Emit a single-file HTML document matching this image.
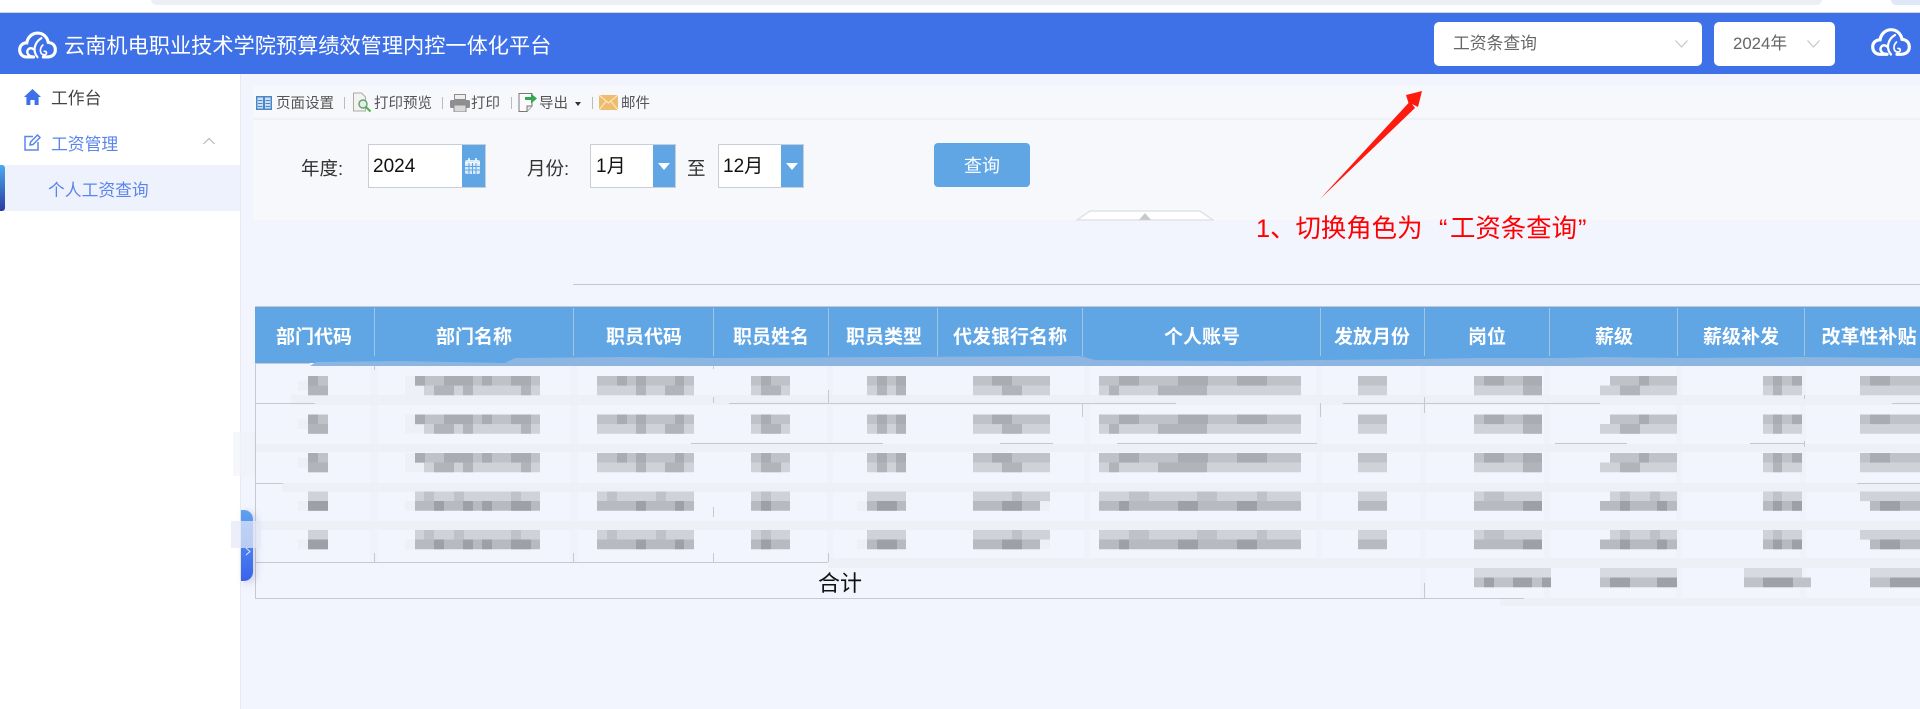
<!DOCTYPE html>
<html lang="zh-CN"><head><meta charset="utf-8"><title>个人工资查询</title>
<style>
html,body{margin:0;padding:0}
body{width:1920px;height:709px;position:relative;overflow:hidden;background:#f2f5fe;font-family:"Liberation Sans","Noto Sans CJK SC",sans-serif;color:#333}
.a,.t{position:absolute;box-sizing:border-box}
.t{white-space:nowrap}
.th{position:absolute;top:324px;height:28px;line-height:28px;font-size:19px;font-weight:700;color:#fff;text-align:center;white-space:nowrap;transform:translateX(-50%)}
.tb{top:94px;height:20px;line-height:20px;font-size:14.5px;color:#555}
.sp{position:absolute;top:97px;width:1px;height:12px;background:#bbb}
.inp{position:absolute;top:144px;height:43px;background:#fff;border:1px solid #c9cdd8}
.btn{position:absolute;top:0;right:0;bottom:0;width:22px;background:#60a5e4}
.tri{position:absolute;left:5px;top:18px;width:0;height:0;border-left:6px solid transparent;border-right:6px solid transparent;border-top:7px solid #fff}
.val{top:154px;height:26px;line-height:26px;font-size:19px;color:#111}
.lab{top:156px;height:26px;line-height:26px;font-size:18.5px;color:#333}
.sel{position:absolute;top:22px;height:44px;background:#fff;border-radius:5px}
</style></head>
<body>
<div class="a" style="left:0;top:0;width:1920px;height:12px;background:#fff"></div>
<div class="a" style="left:151px;top:0;width:1671px;height:5px;background:#eceff5;border-radius:0 0 12px 12px"></div>
<div class="a" style="left:1891px;top:0;width:29px;height:5px;background:#dfe8fa;border-radius:0 0 0 10px"></div>
<div class="a" style="left:0;top:12px;width:1920px;height:1px;background:#d4d4d4"></div>

<!-- header -->
<div class="a" style="left:0;top:13px;width:1920px;height:61px;background:#3e70e8"></div>
<svg class="a" style="left:18px;top:31px" width="39" height="28" viewBox="0 0 40 28" fill="none" stroke="#fff" stroke-width="3.200" stroke-linecap="round"><path d="M16 26.300H9C4 26.300 1.700 22.500 1.700 19 1.700 14.500 5 11.800 9 11.800 10 6 14.500 1.700 20 1.700 26 1.700 30 6 31 11.300 36 11.800 38.300 15 38.300 19 38.300 23.500 35 26.300 30 26.300H26"/><path d="M16 26C10.500 26 8 21.500 10.500 18.500 12 16.800 14.500 17 16 18.500" stroke-width="2.400"/><path d="M24 7C17 11 14.500 20 20 26.500" stroke-width="2.200"/><path d="M25.500 14C21.500 18 22.500 24 27 24 30 24 30 20 27 20.500" stroke-width="1.700"/></svg>
<div class="t" style="left:64px;top:32px;height:30px;line-height:30px;font-size:21.2px;color:#fff">云南机电职业技术学院预算绩效管理内控一体化平台</div>
<div class="sel" style="left:1434px;width:268px"></div>
<div class="t" style="left:1453px;top:32px;height:24px;line-height:24px;font-size:16.800px;color:#666">工资条查询</div>
<svg class="a" style="left:1674px;top:39px" width="15" height="10" fill="none" stroke="#c4c7cf" stroke-width="1.200"><path d="M1.500 1.500L7.500 8 13.500 1.500"/></svg>
<div class="sel" style="left:1714px;width:121px"></div>
<div class="t" style="left:1733px;top:32px;height:24px;line-height:24px;font-size:16.800px;color:#666">2024年</div>
<svg class="a" style="left:1806px;top:39px" width="15" height="10" fill="none" stroke="#c4c7cf" stroke-width="1.200"><path d="M1.500 1.500L7.500 8 13.500 1.500"/></svg>
<svg class="a" style="left:1871px;top:28px" width="40" height="28" viewBox="0 0 40 28" fill="none" stroke="#fff" stroke-width="3.200" stroke-linecap="round"><path d="M16 26.300H9C4 26.300 1.700 22.500 1.700 19 1.700 14.500 5 11.800 9 11.800 10 6 14.500 1.700 20 1.700 26 1.700 30 6 31 11.300 36 11.800 38.300 15 38.300 19 38.300 23.500 35 26.300 30 26.300H26"/><path d="M16 26C10.500 26 8 21.500 10.500 18.500 12 16.800 14.500 17 16 18.500" stroke-width="2.400"/><path d="M24 7C17 11 14.500 20 20 26.500" stroke-width="2.200"/><path d="M25.500 14C21.500 18 22.500 24 27 24 30 24 30 20 27 20.500" stroke-width="1.700"/></svg>

<!-- sidebar -->
<div class="a" style="left:0;top:74px;width:241px;height:635px;background:#fff;border-right:1px solid #e8eaef"></div>
<svg class="a" style="left:24px;top:89px" width="17" height="16" viewBox="0 0 17 16" fill="#3e70e8"><path d="M8.500 0L17 8h-2.400v8h-4v-5H6.400v5h-4V8H0z"/></svg>
<div class="t" style="left:51px;top:87px;height:24px;line-height:24px;font-size:16.800px;color:#444">工作台</div>
<svg class="a" style="left:24px;top:134px" width="17" height="17" viewBox="0 0 17 17" fill="none" stroke="#5b85ea" stroke-width="1.500"><path d="M9 2.500H1v13.500h13V8"/><path d="M6 11l.6-3L13.500 1l2.500 2.500-7 7z"/></svg>
<div class="t" style="left:51px;top:133px;height:24px;line-height:24px;font-size:16.800px;color:#5b85ea">工资管理</div>
<svg class="a" style="left:203px;top:137px" width="12" height="8" fill="none" stroke="#b0b3ba" stroke-width="1"><path d="M.5 7L6 1.500 11.500 7"/></svg>
<div class="a" style="left:0;top:165px;width:240px;height:46px;background:#eef2fd"></div>
<div class="a" style="left:0;top:165px;width:5px;height:46px;background:linear-gradient(#4aaaf0,#2a3aa0);border-radius:0 3px 3px 0"></div>
<div class="t" style="left:48px;top:179px;height:24px;line-height:24px;font-size:16.800px;color:#5b85ea">个人工资查询</div>

<!-- top panel -->
<div class="a" style="left:253px;top:86px;width:1667px;height:134px;background:#f7f8fb"></div>
<div class="a" style="left:253px;top:118px;width:1667px;height:2px;background:#f0f1f4"></div>

<!-- toolbar icons -->
<svg class="a" style="left:256px;top:96px" width="16" height="14"><rect width="16" height="14" fill="#4a86c8"/><rect x="1.500" y="1.500" width="5.500" height="11" fill="#cfe0f4"/><rect x="9" y="1.500" width="5.500" height="11" fill="#cfe0f4"/><path d="M2 4.500h4.500M2 7.500h4.500M2 10.500h4.500M9.500 4.500h4.500M9.500 7.500h4.500M9.500 10.500h4.500" stroke="#4a86c8"/></svg>
<div class="t tb" style="left:276px">页面设置</div><div class="sp" style="left:344px"></div>
<svg class="a" style="left:352px;top:92px" width="20" height="21"><path d="M1.500 1h8l4 4v14h-12z" fill="#f4f4ee" stroke="#aaa"/><circle cx="11" cy="12" r="4" fill="#dff1e4" stroke="#6c9a78" stroke-width="1.400"/><path d="M14 15l4.500 4.500" stroke="#4db84d" stroke-width="2.200"/></svg>
<div class="t tb" style="left:374px">打印预览</div><div class="sp" style="left:442px"></div>
<svg class="a" style="left:450px;top:94px" width="20" height="18"><rect x="4.500" y=".5" width="11" height="5" fill="#eee" stroke="#8d8d8d"/><rect x="0" y="6" width="20" height="8" rx="1.500" fill="#8f8f8f"/><rect x="4" y="11" width="12" height="7" fill="#d8d8d8" stroke="#8d8d8d"/></svg>
<div class="t tb" style="left:471px">打印</div><div class="sp" style="left:511px"></div>
<svg class="a" style="left:518px;top:92px" width="20" height="21"><path d="M1 1.500h13v12.500l-5 5.500H1z" fill="#fbfbfb" stroke="#777"/><path d="M14 14h-5v5.500" fill="#e8e8e8" stroke="#777"/><path d="M7 5h6V1.500L19 6.500l-6 5V8H7z" fill="#34a853"/></svg>
<div class="t tb" style="left:539px">导出</div>
<div class="a" style="left:575px;top:102px;width:0;height:0;border-left:3.500px solid transparent;border-right:3.500px solid transparent;border-top:4px solid #333"></div>
<div class="sp" style="left:592px"></div>
<svg class="a" style="left:599px;top:95px" width="19" height="15"><rect width="19" height="15" fill="#eebc6e"/><path d="M0 0l9.500 8L19 0M0 15l7-8.500M19 15l-7-8.500" fill="none" stroke="#fbe6c2" stroke-width="1.200"/></svg>
<div class="t tb" style="left:621px">邮件</div>

<!-- form -->
<div class="t lab" style="left:301px">年度:</div>
<div class="inp" style="left:368px;width:116px;height:42px"><div class="btn" style="width:23px"></div></div>
<svg class="a" style="left:464px;top:158px" width="17" height="16"><rect x="1" y="2" width="15" height="14" rx="2" fill="#d9ebfb"/><path d="M1 5h15" stroke="#fff"/><path d="M5 0v3M12 0v3" stroke="#fff" stroke-width="1.500"/><path d="M1 8.500h15M1 12h15M5 5v11M8.500 5v11M12 5v11" stroke="#60a5e4"/></svg>
<div class="t val" style="left:373px">2024</div>
<div class="t lab" style="left:527px">月份:</div>
<div class="inp" style="left:590px;width:84px;height:42px"><div class="btn"><div class="tri"></div></div></div>
<div class="t val" style="left:596px">1月</div>
<div class="t lab" style="left:687px">至</div>
<div class="inp" style="left:718px;width:84px;height:42px"><div class="btn"><div class="tri"></div></div></div>
<div class="t val" style="left:723px">12月</div>
<div class="a" style="left:934px;top:143px;width:96px;height:44px;background:#60a5e4;border-radius:4px;color:#fff;font-size:18px;line-height:47px;text-align:center">查询</div>
<svg class="a" style="left:1076px;top:209px" width="138" height="12"><path d="M1 11L14 2h110l13 9z" fill="#fff" stroke="#e2e3e6" stroke-width="1.600"/><path d="M63 11l6-7 6 7z" fill="#c8c9cc"/></svg>

<!-- table -->
<svg class="a" style="left:0;top:0" width="1920" height="709" fill="none">
<defs>
<g id="A" stroke-width="9.700">
<path stroke="#eef0f7" d="M298 9.600h10M405 4.800h10M405 14.400h10M415 14.400h10"/>
<path stroke="#c0c2ca" d="M308 4.800h20M415 4.800h125M597 4.800h97M751 4.800h39M867 4.800h39M973 4.800h77M1099 4.800h202M1358 4.800h29M1474 4.800h68M1610 4.800h67M1763 4.800h39M1860 4.800h60"/>
<path stroke="#d0d2da" d="M308 14.400h20M424 14.400h116M597 14.400h97M751 14.400h39M867 14.400h39M973 14.400h77M1099 14.400h202M1358 14.400h29M1474 14.400h68M1600 14.400h77M1763 14.400h39M1860 14.400h60"/>
<path stroke="#aaacb4" d="M308 4.800h10M415 4.800h10M444 4.800h29M482 4.800h10M511 4.800h20M617 4.800h10M636 4.800h10M675 4.800h9M761 4.800h10M877 4.800h10M896 4.800h10M992 4.800h20M1119 4.800h20M1178 4.800h30M1237 4.800h30M1484 4.800h20M1523 4.800h19M1639 4.800h10M1773 4.800h9M1792 4.800h10M1870 4.800h20"/>
<path stroke="#b2b4bc" d="M308 14.400h20M434 14.400h20M463 14.400h10M521 14.400h10M636 14.400h10M665 14.400h19M761 14.400h20M877 14.400h10M896 14.400h10M1002 14.400h20M1109 14.400h10M1158 14.400h49M1523 14.400h19M1620 14.400h20M1773 14.400h9"/>
</g>
<g id="B" stroke-width="9.700">
<path stroke="#eef0f7" d="M298 14.400h10M405 14.400h10M857 14.400h10M1040 14.400h10"/>
<path stroke="#d0d2da" d="M308 4.800h20M415 4.800h125M597 4.800h97M751 4.800h39M867 4.800h39M973 4.800h77M1099 4.800h202M1358 4.800h29M1474 4.800h68M1610 4.800h67M1763 4.800h39M1860 4.800h60"/>
<path stroke="#c0c2ca" d="M424 4.800h10M454 4.800h10M511 4.800h10M607 4.800h10M656 4.800h10M761 4.800h10M1012 4.800h10M1129 4.800h20M1197 4.800h20M1257 4.800h10M1484 4.800h20M1620 4.800h10M1650 4.800h10M1773 4.800h9"/>
<path stroke="#b8bac2" d="M308 14.400h20M415 14.400h125M597 14.400h97M751 14.400h39M867 14.400h39M973 14.400h67M1099 14.400h202M1358 14.400h29M1474 14.400h68M1600 14.400h77M1763 14.400h39M1870 14.400h50"/>
<path stroke="#9ea0a8" d="M308 14.400h20M434 14.400h10M463 14.400h10M482 14.400h10M511 14.400h20M636 14.400h10M675 14.400h9M761 14.400h10M877 14.400h20M1002 14.400h20M1119 14.400h10M1178 14.400h20M1237 14.400h20M1523 14.400h19M1620 14.400h10M1657 14.400h10M1773 14.400h9M1792 14.400h10M1880 14.400h20"/>
</g>
</defs>
<path d="M573 284.500H1920" stroke="#c4c7ce"/>
<rect x="255" y="307" width="1665" height="56" fill="#60a5e4"/>
<path d="M255 306.500H1920" stroke="#c4c7ce"/>
<path stroke="#a5c4e2" d="M374.500 308v48M573.500 308v48M713.500 308v48M828.500 308v48M937.500 308v48M1082.500 308v48M1320.500 308v48M1424.500 308v48M1549.500 308v48M1677.500 308v48M1804.500 308v48"/>
<path fill="#f2f5fe" d="M255 366H1920V380H255z"/>
<path fill="#8cb6e1" stroke="none" d="M310 366L316 362 400 361 505 363 515 358 620 357 720 358 1080 356 1095 360 1240 361 1320 360 1420 359 1480 358 1560 358 1600 357 1690 358 1800 357 1920 358V366z"/>
<!-- erased smear bands -->
<path fill="#f0f2fb" stroke="none" d="M370 366h8v197h-8zM570 366h8v197h-8zM827 366h6v197h-6zM1084 366h6v200h-6zM1316 366h6v200h-6zM1420 366h6v235h-6zM1544 366h6v235h-6zM1676 366h6v235h-6zM1800 366h6v235h-6z"/>
<path fill="#eef0f8" stroke="none" d="M291 395H1920V405H291zM255 444H1920V452H255zM282 483H1920V492H282zM255 521H1920V530H255zM828 558H1920V568H828zM1500 598H1920V606H1500z"/>
<path stroke="#c6c9d0" d="M255.500 363V598M255 363.500H310M374.500 366V370M374.500 553V562M573.500 553V562M713.500 366V369M713.500 397V403M713.500 507V517M713.500 553V562M828.500 390V403M828.500 553V562M1082.500 403V417M1320.500 403V417M1424.500 397V413M1804.500 395V399M1804.500 441V447M1424.500 583V598M255 403.500H315M729 403.500H1176M1343 403.500H1600M1892 403.500H1920M691 443.500H883M1000 443.500H1053M1117 443.500H1317M1555 443.500H1627M1750 443.500H1805M255 483.500H283M1857 483.500H1920M255 562.500H828M255 598.500H1524"/>
<use href="#A" y="376"/>
<use href="#A" y="414.500"/>
<use href="#A" y="453"/>
<use href="#B" y="491.500"/>
<use href="#B" y="530"/>
<g stroke-width="9.700">
<path stroke="#d8dae2" d="M1474 572.800h77M1600 572.800h77M1744 572.800h58M1870 572.800h50"/>
<path stroke="#c0c2ca" d="M1474 582.400h77M1600 582.400h77M1744 582.400h67M1870 582.400h50"/>
<path stroke="#9fa1a9" d="M1484 582.400h10M1513 582.400h19M1542 582.400h9M1610 582.400h20M1657 582.400h20M1763 582.400h30M1890 582.400h30"/>
</g>
</svg>
<div class="th" style="left:314px">部门代码</div>
<div class="th" style="left:474px">部门名称</div>
<div class="th" style="left:644px">职员代码</div>
<div class="th" style="left:771px">职员姓名</div>
<div class="th" style="left:884px">职员类型</div>
<div class="th" style="left:1010px">代发银行名称</div>
<div class="th" style="left:1202px">个人账号</div>
<div class="th" style="left:1372px">发放月份</div>
<div class="th" style="left:1487px">岗位</div>
<div class="th" style="left:1614px">薪级</div>
<div class="th" style="left:1741px">薪级补发</div>
<div class="th" style="left:1869px">改革性补贴</div>
<div class="t" style="left:818px;top:569px;height:30px;line-height:30px;font-size:22px;color:#111">合计</div>

<!-- side toggle -->
<div class="a" style="left:233px;top:432px;width:22px;height:44px;background:rgba(240,242,248,.6)"></div>
<div class="a" style="left:241px;top:510px;width:12px;height:71px;background:linear-gradient(#5ea2f0,#3a62ec);border-radius:0 9px 9px 0;box-shadow:3px 2px 8px rgba(80,90,130,.22)"></div>
<div class="a" style="left:231px;top:521px;width:30px;height:27px;background:rgba(228,233,246,.72)"></div>
<svg class="a" style="left:245px;top:547px" width="6" height="9" fill="none" stroke="#dfe8fb"><path d="M1 1l4 3.500L1 8"/></svg>

<!-- annotation -->
<svg class="a" style="left:0;top:0;pointer-events:none" width="1920" height="709"><path fill="#ff1a10" d="M1320 199L1408.500 103 1406 95 1422 91 1418 107 1412 104 1415 108z"/></svg>
<div class="t" style="left:1256px;top:212px;height:34px;line-height:34px;font-size:25.400px;color:#f00">1、切换角色为</div>
<div class="t" style="left:1439px;top:212px;height:34px;line-height:34px;font-size:25.400px;color:#f00">“</div>
<div class="t" style="left:1450px;top:212px;height:34px;line-height:34px;font-size:25.400px;color:#f00">工资条查询</div>
<div class="t" style="left:1578px;top:212px;height:34px;line-height:34px;font-size:25.400px;color:#f00">”</div>
</body></html>
